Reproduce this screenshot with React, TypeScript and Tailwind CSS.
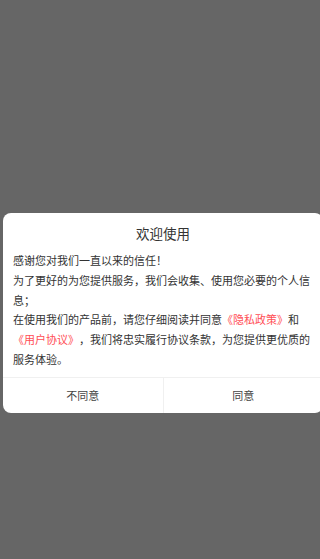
import React from "react";

export default function App() {
  const font = { fontFamily: '"Noto Sans CJK SC", "Noto Sans", sans-serif' };
  return (
    <div className="w-[320px] h-[559px] overflow-hidden bg-[#666666] pt-[213px]" style={font}>
      <div className="ml-[3px] w-[320px] rounded-[8px] bg-white">
        <div className="pt-[10px] text-center text-[13.5px] leading-[20px] text-[#333333]">欢迎使用</div>
        <div className="mt-[8px] px-[10px] pb-[7px] text-[11px] leading-[19.8px] text-[#333333] [text-spacing-trim:space-all]">
          <p>感谢您对我们一直以来的信任！</p>
          <p>为了更好的为您提供服务，我们会收集、使用您必要的个人信息；</p>
          <p>
            在使用我们的产品前，请您仔细阅读并同意
            <span className="text-[#ff4e55]">《隐私政策》</span>和
            <span className="text-[#ff4e55]">《用户协议》</span>，我们将忠实履行协议条款，为您提供更优质的服务体验。
          </p>
        </div>
        <div className="flex h-[36px] border-t border-[#f0f0f0] text-[11px] text-[#444444]">
          <button className="flex flex-1 items-center justify-center border-r border-[#f0f0f0]">不同意</button>
          <button className="flex flex-1 items-center justify-center">同意</button>
        </div>
      </div>
    </div>
  );
}
